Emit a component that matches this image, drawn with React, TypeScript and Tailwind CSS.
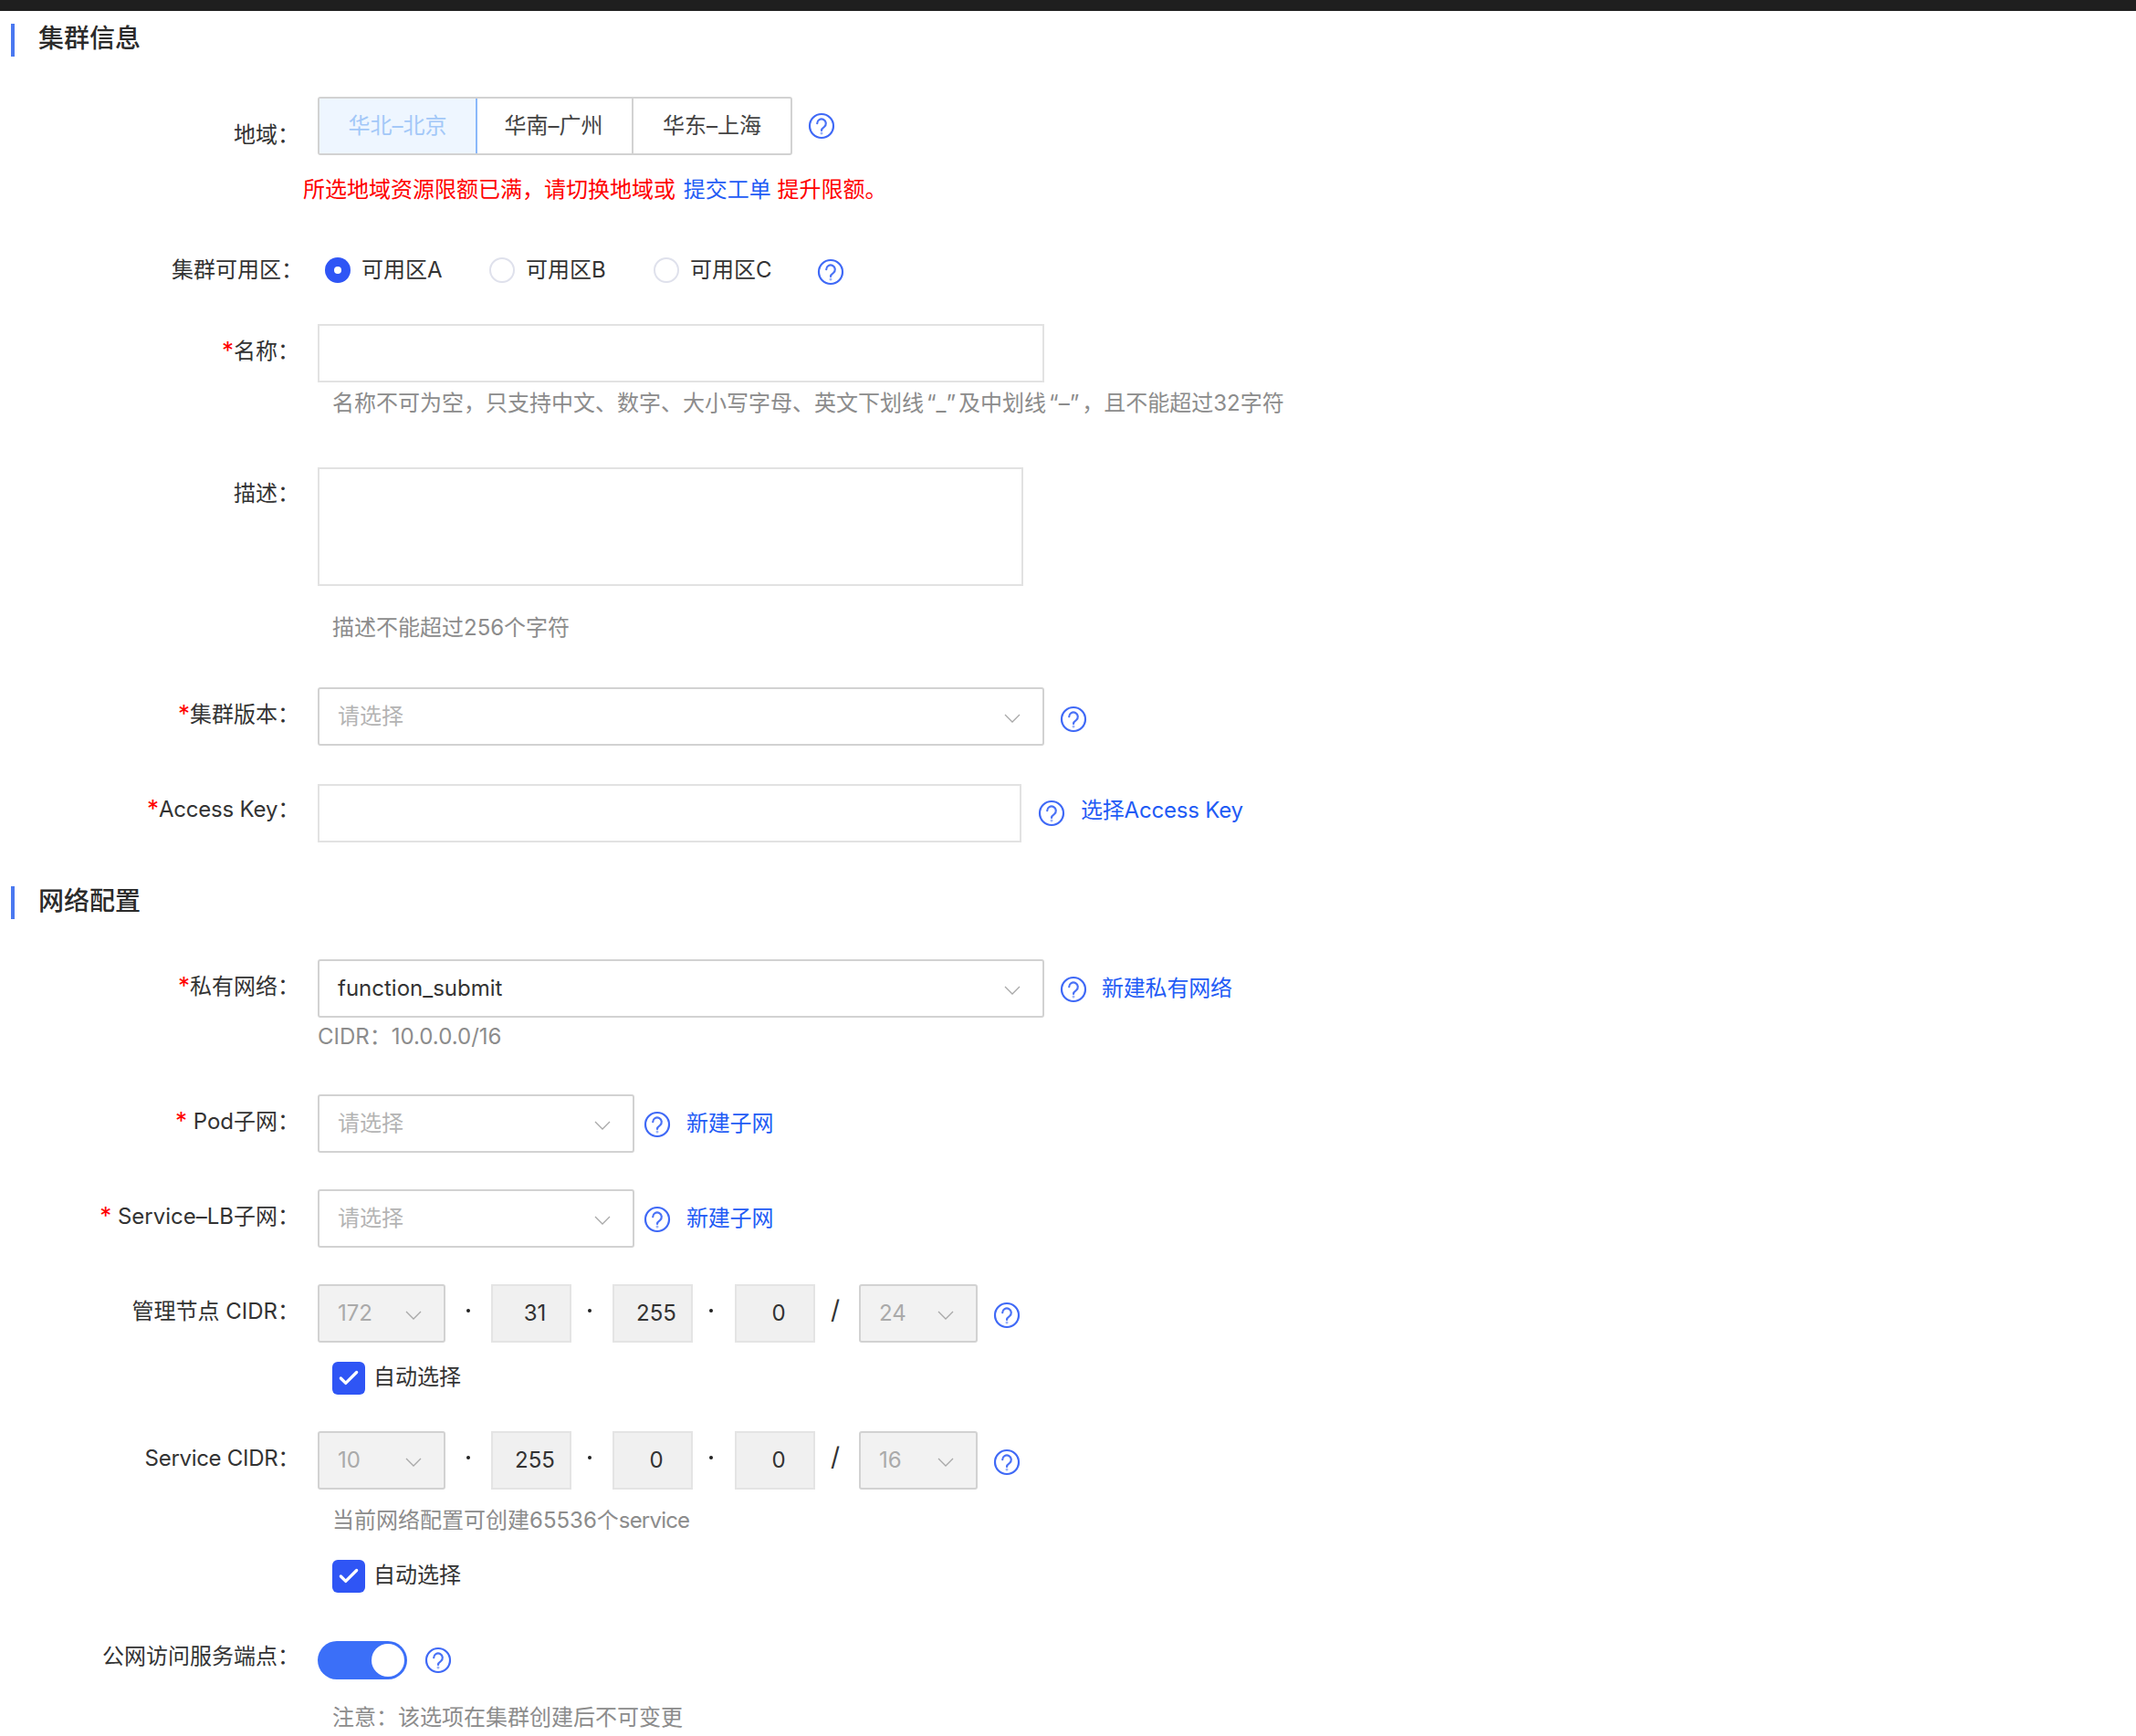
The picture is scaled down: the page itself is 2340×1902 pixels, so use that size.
import React from 'react';
import { Check } from 'lucide-react';

const FONT = 'font-["Inter","Noto_Sans_CJK_SC",sans-serif]';

function Help(props: { className?: string }): JSX.Element {
    return (
        <svg width="30" height="30" viewBox="0 0 30 30" fill="none" className={`shrink-0 ${props.className ?? ''}`}>
            <circle cx="15" cy="15" r="13" stroke="#3f69f6" strokeWidth="2.2" />
            <path d="M10.2 12.2a4.8 4.8 0 1 1 7.6 3.9c-1.8 1.2-2.8 2-2.8 3.9" stroke="#4a72f6" strokeWidth="2.2" strokeLinecap="round" />
            <circle cx="15" cy="23" r="1.5" fill="#9db4fa" />
        </svg>
    );
}

function Chevron(): JSX.Element {
    return (
        <svg width="18" height="10" viewBox="0 0 18 10" fill="none" className="mt-[3px] shrink-0">
            <path d="M1 1l8 8 8-8" stroke="#a8a8a8" strokeWidth="1.3" />
        </svg>
    );
}

function SectionTitle(props: { title: string; className?: string }): JSX.Element {
    return (
        <div className={`flex h-9 items-center ${props.className ?? ''}`}>
            <div className="ml-3 h-9 w-1 bg-[#4a78f0]" />
            <div className="ml-[26px] -translate-y-[2px] text-[28px] font-medium leading-9 text-[#2b2b2b]">
                {props.title}
            </div>
        </div>
    );
}

function Row(props: {
    label: string;
    required?: boolean;
    labelClass?: string;
    className?: string;
    children: React.ReactNode;
}): JSX.Element {
    return (
        <div className={`flex ${props.className ?? ''}`}>
            <div
                className={`w-[348px] shrink-0 whitespace-nowrap text-right text-[24px] leading-9 text-[#333] ${props.labelClass ?? 'pr-[20px] pt-[11px]'}`}
            >
                {props.required && <span className="text-[26px] text-[#f00]">*</span>}
                {props.label}：
            </div>
            <div className="min-w-0 flex-1">{props.children}</div>
        </div>
    );
}

function Hint(props: { children: React.ReactNode; className?: string }): JSX.Element {
    return (
        <div className={`whitespace-nowrap text-[24px] leading-9 text-[#8c8c8c] ${props.className ?? ''}`}>
            {props.children}
        </div>
    );
}

function Select(props: {
    value?: string;
    placeholder?: string;
    width: string;
    disabled?: boolean;
}): JSX.Element {
    return (
        <div
            className={`flex h-16 shrink-0 items-center justify-between rounded-[3px] border-2 border-[#d2d2d2] pl-[20px] pr-[24px] text-[24px] ${props.width} ${props.disabled ? 'bg-[#f2f2f2] !text-[#aaa]' : 'bg-white'} ${props.value ? 'text-[#333]' : 'text-[#b4b4b4]'}`}
        >
            <span>{props.value ?? props.placeholder}</span>
            <Chevron />
        </div>
    );
}

function Link(props: { text: string }): JSX.Element {
    return <span className="whitespace-nowrap text-[24px] tracking-[-0.2px] text-[#1f5bf5]">{props.text}</span>;
}

function Radio(props: { label: string; checked?: boolean; className: string }): JSX.Element {
    return (
        <div className={`flex items-center ${props.className}`}>
            {props.checked ? (
                <div className="flex h-7 w-7 items-center justify-center rounded-full bg-[#2f55f5]">
                    <div className="h-2 w-2 rounded-full bg-white" />
                </div>
            ) : (
                <div className="h-7 w-7 rounded-full border-2 border-[#dfe1ec] bg-white" />
            )}
            <span className="ml-3 text-[24px] text-[#333]">{props.label}</span>
        </div>
    );
}

function AutoSelect(props: { className: string }): JSX.Element {
    return (
        <div className={`flex h-9 items-center pl-4 ${props.className}`}>
            <div className="flex h-9 w-9 items-center justify-center rounded-[6px] bg-[#2f55f5]">
                <Check size={26} strokeWidth={3} className="text-white" />
            </div>
            <span className="ml-[9px] -translate-y-px text-[24px] text-[#333]">自动选择</span>
        </div>
    );
}

function Octet(props: { value: string; className?: string }): JSX.Element {
    return (
        <div className={`flex h-16 w-[88px] shrink-0 items-center justify-center border-2 border-[#e4e4e4] bg-[#f0f0f0] pl-[8px] text-[24px] text-[#333] ${props.className ?? ''}`}>
            {props.value}
        </div>
    );
}

function Dot(): JSX.Element {
    return (
        <div className="flex h-16 w-[45px] shrink-0 justify-center pr-[6px] pt-[27px]">
            <span className="h-1 w-1 rounded-full bg-[#222]" />
        </div>
    );
}

function CidrInputs(props: { first: string; octets: string[]; mask: string }): JSX.Element {
    return (
        <div className="flex items-start">
            <Select value={props.first} width="w-[140px]" disabled />
            <div className="w-[5px] shrink-0" />
            <Dot />
            <Octet value={props.octets[0]} />
            <Dot />
            <Octet value={props.octets[1]} />
            <Dot />
            <Octet value={props.octets[2]} className="ml-px" />
            <div className="flex h-16 w-[48px] shrink-0 justify-center pr-[4px] pt-[10px] text-[28px] leading-9 text-[#333]">/</div>
            <Select value={props.mask} width="w-[130px]" disabled />
            <Help className="ml-[17px] mt-[19px]" />
        </div>
    );
}

export default function App(): JSX.Element {
    return (
        <div className={`h-[1902px] overflow-hidden bg-white ${FONT}`}>
            <div className="h-3 bg-[#1f1f1f]" />
            <SectionTitle title="集群信息" className="mt-[14px]" />

            <Row label="地域" labelClass="pr-[20px] pt-[24px]" className="mt-[44px]">
                <div className="flex items-center">
                    <div className="flex h-16 w-[520px] overflow-hidden rounded-[3px] border-2 border-[#d2d2d2] text-[24px] text-[#444]">
                        <div className="-m-[2px] flex w-[175px] items-center justify-center border-2 border-[#8ab8fa] bg-[#eef6ff] text-[#a3c8f8]">华北–北京</div>
                        <div className="flex w-[173px] items-center justify-center border-r-2 border-[#d2d2d2]">华南–广州</div>
                        <div className="flex flex-1 items-center justify-center">华东–上海</div>
                    </div>
                    <Help className="ml-[17px]" />
                </div>
            </Row>
            <div className="ml-[332px] mt-[20px] whitespace-nowrap text-[24px] leading-9 text-[#f00]">
                所选地域资源限额已满，请切换地域或 <span className="ml-[2px] text-[#1f5bf5]">提交工单</span> 提升限额。
            </div>

            <Row label="集群可用区" labelClass="pr-[16px]" className="mt-[52px]">
                <div className="flex h-9 items-center">
                    <Radio label="可用区A" checked className="ml-2 w-[180px]" />
                    <Radio label="可用区B" className="w-[180px]" />
                    <Radio label="可用区C" className="w-[179px]" />
                    <Help className="mt-[3px]" />
                </div>
            </Row>

            <Row label="名称" required className="mt-[41px]">
                <div className="h-16 w-[796px] border-2 border-[#e2e2e2] bg-white" />
                <Hint className="mt-[5px] pl-[16px]">
                    名称不可为空，只支持中文、数字、大小写字母、英文下划线<span className="px-[3px]">“_”</span>及中划线<span className="px-[3px]">“–”</span>，且不能超过32字符
                </Hint>
            </Row>

            <Row label="描述" className="mt-[52px]">
                <div className="h-[130px] w-[773px] border-2 border-[#e2e2e2] bg-white" />
                <Hint className="mt-[28px] pl-[16px]">描述不能超过256个字符</Hint>
            </Row>

            <Row label="集群版本" required className="mt-[47px]">
                <div className="flex items-center">
                    <Select placeholder="请选择" width="w-[796px]" />
                    <Help className="ml-[17px] mt-[5px]" />
                </div>
            </Row>

            <Row label="Access Key" required labelClass="pr-[20px] pt-[9px] tracking-[-0.2px]" className="mt-[42px]">
                <div className="flex items-center">
                    <div className="h-16 w-[771px] border-2 border-[#e2e2e2] bg-white" />
                    <Help className="ml-[18px]" />
                    <span className="ml-[17px] -translate-y-[3px]"><Link text="选择Access Key" /></span>
                </div>
            </Row>

            <SectionTitle title="网络配置" className="mt-[48px]" />

            <Row label="私有网络" required className="mt-[44px]">
                <div className="flex items-center">
                    <Select value="function_submit" width="w-[796px]" />
                    <Help className="ml-[17px] mt-[2px]" />
                    <span className="ml-[16px]"><Link text="新建私有网络" /></span>
                </div>
                <Hint className="mt-[3px]">CIDR：10.0.0.0/16</Hint>
            </Row>

            <Row label=" Pod子网" required className="mt-[45px]">
                <div className="flex items-center">
                    <Select placeholder="请选择" width="w-[347px]" />
                    <Help className="ml-[10px] mt-[2px]" />
                    <span className="ml-[17px]"><Link text="新建子网" /></span>
                </div>
            </Row>

            <Row label=" Service–LB子网" required className="mt-[40px]">
                <div className="flex items-center">
                    <Select placeholder="请选择" width="w-[347px]" />
                    <Help className="ml-[10px] mt-[2px]" />
                    <span className="ml-[17px]"><Link text="新建子网" /></span>
                </div>
            </Row>

            <Row label="管理节点 CIDR" labelClass="pr-[20px] pt-[12px]" className="mt-[40px]">
                <CidrInputs first="172" octets={['31', '255', '0']} mask="24" />
                <AutoSelect className="mt-[21px]" />
            </Row>

            <Row label="Service CIDR" labelClass="pr-[20px] pt-[12px] tracking-[-0.3px]" className="mt-[40px]">
                <CidrInputs first="10" octets={['255', '0', '0']} mask="16" />
                <Hint className="mt-[16px] pl-[16px]">
                    当前网络配置可创建65536个<span className="tracking-[-0.8px]">service</span>
                </Hint>
                <AutoSelect className="mt-[25px]" />
            </Row>

            <Row label="公网访问服务端点" labelClass="pr-[20px] -translate-y-px" className="mt-[53px]">
                <div className="flex items-center">
                    <div className="flex h-[42px] w-[98px] items-center justify-end rounded-full bg-[#3b6ff8] pr-[3px]">
                        <div className="h-9 w-9 rounded-full bg-white" />
                    </div>
                    <Help className="ml-[19px]" />
                </div>
                <Hint className="mt-[24px] pl-[16px]">注意：该选项在集群创建后不可变更</Hint>
            </Row>
        </div>
    );
}
